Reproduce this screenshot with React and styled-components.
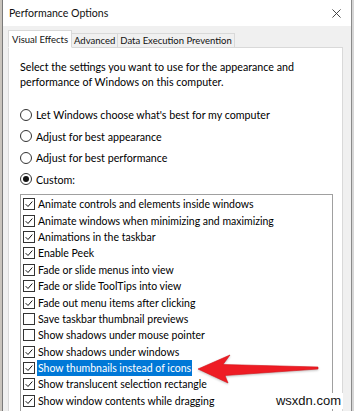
import React from 'react';
import styled, { createGlobalStyle } from 'styled-components';

const GlobalStyle = createGlobalStyle`
  body {
    margin: 0;
    background: #e8e8e8;
    font-family: Lato, "Noto Sans", sans-serif;
  }
`;

const radios = [
  { label: "Let Windows choose what's best for my computer", on: false },
  { label: 'Adjust for best appearance', on: false },
  { label: 'Adjust for best performance', on: false },
  { label: 'Custom:', on: true },
];

const effects = [
  { label: 'Animate controls and elements inside windows', on: true },
  { label: 'Animate windows when minimizing and maximizing', on: true },
  { label: 'Animations in the taskbar', on: true },
  { label: 'Enable Peek', on: true },
  { label: 'Fade or slide menus into view', on: true },
  { label: 'Fade or slide ToolTips into view', on: true },
  { label: 'Fade out menu items after clicking', on: true },
  { label: 'Save taskbar thumbnail previews', on: false },
  { label: 'Show shadows under mouse pointer', on: false },
  { label: 'Show shadows under windows', on: true },
  { label: 'Show thumbnails instead of icons', on: true, selected: true },
  { label: 'Show translucent selection rectangle', on: true },
  { label: 'Show window contents while dragging', on: true },
];

export default function App() {
  return (
    <Page>
      <GlobalStyle />
      <Edge />
      <Dialog>
        <TitleBar>
          <Title>Performance Options</Title>
          <Close viewBox="0 0 10 10">
            <path d="M0.5 0.5 L9.5 9.5 M9.5 0.5 L0.5 9.5" />
          </Close>
        </TitleBar>
        <Body>
          <Tabs>
            <Tab active>Visual Effects</Tab>
            <Tab>Advanced</Tab>
            <Tab>Data Execution Prevention</Tab>
          </Tabs>
          <Panel>
            <Intro>
              Select the settings you want to use for the appearance and
              performance of Windows on this computer.
            </Intro>
            <RadioGroup>
              {radios.map((r) => (
                <RadioRow key={r.label}>
                  <Radio on={r.on} />
                  {r.label}
                </RadioRow>
              ))}
            </RadioGroup>
            <ListBox>
              {effects.map((e) => (
                <Item key={e.label}>
                  <Box>
                    {e.on && (
                      <svg viewBox="0 0 12 12" width="10" height="10">
                        <path d="M2 6.2 L4.8 9 L10 3" fill="none" stroke="#111" strokeWidth="1.2" />
                      </svg>
                    )}
                  </Box>
                  <Label selected={e.selected}>{e.label}</Label>
                </Item>
              ))}
            </ListBox>
          </Panel>
        </Body>
      </Dialog>
      <Edge right />
      <Arrow viewBox="0 0 124 32" width="124" height="32">
        <path
          d="M1 15 L33 1 L26 10.5 L121 13 L121 15 L28 21.5 L31 29 Z"
          fill="#ee1c24"
          stroke="#d50f16"
          strokeWidth="0.6"
          strokeLinejoin="round"
        />
      </Arrow>
      <Watermark>wsxdn.com</Watermark>
    </Page>
  );
}

const Page = styled.div`
  position: relative;
  display: flex;
  width: 354px;
  height: 411px;
  overflow: hidden;
`;

const Edge = styled.div`
  width: 2px;
  flex: none;
  background: ${(p) => (p.right ? '#d6d6d6' : '#c9c4bd')};
`;

const Dialog = styled.div`
  flex: 1;
  display: flex;
  flex-direction: column;
  background: #f0f0f0;
  border-left: 1px solid #7a7a7a;
  border-right: 1px solid #8a8a8a;
`;

const TitleBar = styled.div`
  height: 26px;
  flex: none;
  display: flex;
  align-items: center;
  justify-content: space-between;
  padding: 0 10px 0 6px;
  background: #ffffff;
`;

const Title = styled.span`
  font-size: 10.6px;
  color: #111;
`;

const Close = styled.svg`
  width: 9px;
  height: 9px;
  stroke: #333;
  stroke-width: 1;
`;

const Body = styled.div`
  flex: 1;
  display: flex;
  flex-direction: column;
  padding: 6px 8px 0 5px;
`;

const Tabs = styled.div`
  display: flex;
  align-items: flex-end;
  height: 16px;
  margin-bottom: -1px;
`;

const Tab = styled.div`
  position: relative;
  z-index: ${(p) => (p.active ? 1 : 0)};
  height: ${(p) => (p.active ? '16px' : '13px')};
  display: flex;
  align-items: center;
  padding: 0 ${(p) => (p.active ? '3px' : '2px')};
  font-size: 9.5px;
  color: #111;
  background: ${(p) => (p.active ? '#ffffff' : '#f0f0f0')};
  border: 1px solid #d9d9d9;
  border-bottom-color: ${(p) => (p.active ? '#ffffff' : '#d9d9d9')};
  & + & {
    margin-left: -1px;
  }
`;

const Panel = styled.div`
  flex: 1;
  background: #ffffff;
  border: 1px solid #d9d9d9;
  padding: 11px 9px 0 11px;
`;

const Intro = styled.p`
  margin: 0;
  font-size: 10.7px;
  line-height: 15px;
  color: #000;
`;

const RadioGroup = styled.div`
  margin-top: 15px;
`;

const RadioRow = styled.div`
  display: flex;
  align-items: center;
  gap: 4px;
  height: 21.5px;
  font-size: 10.7px;
  color: #000;
`;

const Radio = styled.span`
  width: 10px;
  height: 10px;
  flex: none;
  border: 1px solid #333;
  border-radius: 50%;
  display: flex;
  align-items: center;
  justify-content: center;
  &::after {
    content: '';
    display: ${(p) => (p.on ? 'block' : 'none')};
    width: 6px;
    height: 6px;
    border-radius: 50%;
    background: #111;
  }
`;

const ListBox = styled.div`
  margin-top: 4px;
  border: 1px solid #a0a0a0;
  border-bottom: none;
  padding: 1px 0 0 2px;
  min-height: 240px;
`;

const Item = styled.div`
  display: flex;
  align-items: center;
  height: 16.4px;
  font-size: 10.5px;
  color: #000;
`;

const Box = styled.span`
  width: 10px;
  height: 10px;
  flex: none;
  border: 1px solid #333;
  display: flex;
  align-items: center;
  justify-content: center;
  margin-right: 2px;
`;

const Label = styled.span`
  padding: 0 1px;
  line-height: 16px;
  background: ${(p) => (p.selected ? '#0078d7' : 'transparent')};
  color: ${(p) => (p.selected ? '#ffffff' : '#000')};
`;

const Arrow = styled.svg`
  position: absolute;
  left: 197px;
  top: 354px;
  filter: drop-shadow(0 1px 1px rgba(0, 0, 0, 0.25));
`;

const Watermark = styled.div`
  position: absolute;
  right: 11px;
  bottom: 2px;
  padding: 0 2px;
  background: #ffffff;
  font-family: "Liberation Sans", Arial, sans-serif;
  font-size: 13px;
  line-height: 16px;
  color: #111;
`;
